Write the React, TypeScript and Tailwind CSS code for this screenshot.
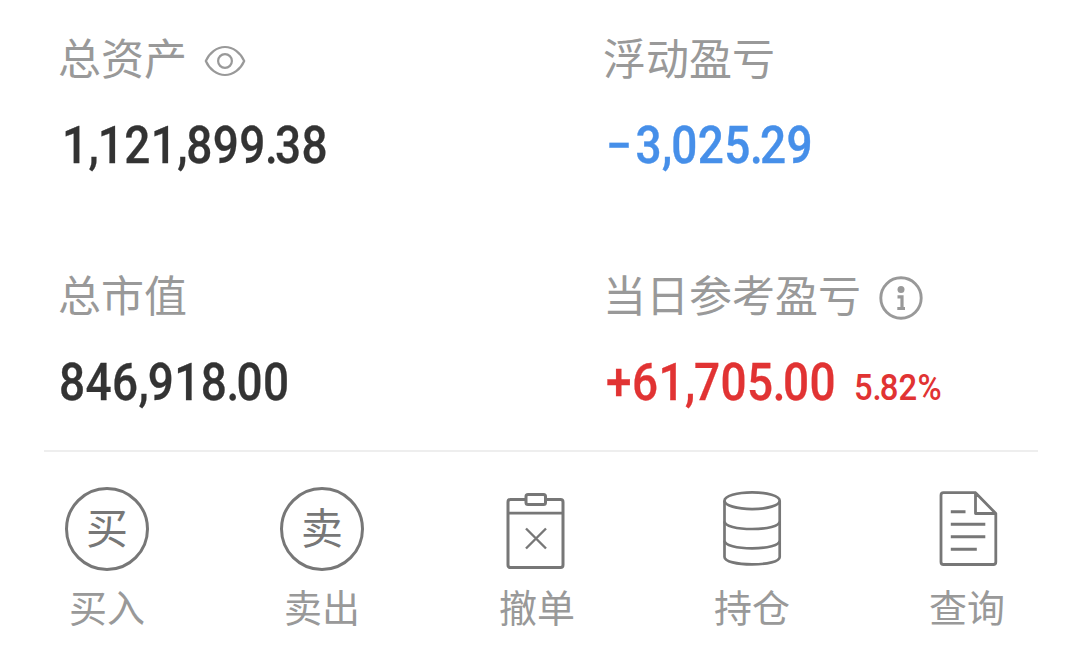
import React from 'react';

const EyeIcon = () => {
  return <svg width="42" height="32" viewBox="0 0 42 32" fill="none" stroke="#999999" strokeWidth="2.2">
      <path d="M1.800 16C5.500 7.5 13 2 21 2S36.500 7.5 40.200 16C36.500 24.500 29 30 21 30S5.500 24.500 1.800 16Z" strokeLinejoin="round" />
      <circle cx="21" cy="16" r="6.900" />
    </svg>;
};
const InfoIcon = () => {
  return <svg width="44" height="44" viewBox="0 0 44 44" fill="none" stroke="#999999" strokeWidth="2.900">
      <circle cx="22" cy="22" r="20.200" />
      <circle cx="22" cy="13.500" r="3.500" fill="#999999" stroke="none" />
      <path d="M18.500 20.800H23V32.500M18.300 32.500H26" strokeWidth="3.200" />
    </svg>;
};
const CancelIcon = () => {
  return <svg width="84" height="84" viewBox="0 0 84 84" fill="none" stroke="#777777" strokeWidth="3">
      <path d="M31 12.500H15.500Q13 12.500 13 15V78Q13 80.500 15.500 80.500H65.500Q68 80.500 68 78V15Q68 12.500 65.500 12.500H50.500" />
      <rect x="31" y="7.500" width="19.500" height="10" rx="2" />
      <path d="M13 26.200H68" strokeWidth="2.800" />
      <path d="M31 41.500L51 61.500M51 41.500L31 61.500" strokeWidth="2.400" />
    </svg>;
};
const HoldingsIcon = () => {
  return <svg width="84" height="84" viewBox="0 0 84 84" fill="none" stroke="#777777" strokeWidth="2.700">
      <ellipse cx="42.100" cy="13.700" rx="27.600" ry="8.400" />
      <path d="M14.500 13.700V70C14.500 74.500 27 77.400 42.100 77.400S69.700 74.500 69.700 70V13.700" />
      <path d="M14.500 34.500C14.500 39 27 42 42.100 42S69.700 39 69.700 34.500" />
      <path d="M14.500 53.800C14.500 58.300 27 61.300 42.100 61.300S69.700 58.300 69.700 53.800" />
    </svg>;
};
const QueryIcon = () => {
  return <svg width="84" height="84" viewBox="0 0 84 84" fill="none" stroke="#777777" strokeWidth="2.800" strokeLinejoin="round">
      <path d="M50.500 5.700H18.500Q16 5.700 16 8.200V75Q16 77.500 18.500 77.500H68.300Q70.800 77.500 70.800 75V26.500L50.500 5.700V26.500H70.800" />
      <path d="M25.800 24.700H40.500M25.800 37.300H60.300M25.800 49.700H60.300M25.800 62.300H51.800" strokeWidth="3" />
    </svg>;
};
const RoundIcon = ({
  text
}: {
  text: string;
}) => {
  return <span className="flex h-[84px] w-[84px] items-center justify-center rounded-full border-[3px] border-[#777777] text-[42px] leading-[78px] text-[#777777]">
      <span className="-mt-[6px]">{text}</span>
    </span>;
};

const actions = [{
  label: '买入',
  icon: <RoundIcon text="买" />
}, {
  label: '卖出',
  icon: <RoundIcon text="卖" />
}, {
  label: '撤单',
  icon: <CancelIcon />
}, {
  label: '持仓',
  icon: <HoldingsIcon />
}, {
  label: '查询',
  icon: <QueryIcon />
}];

const Label = ({
  text,
  children
}: {
  text: string;
  children?: React.ReactNode;
}) => {
  return <div className="flex h-16 items-center text-[43px] leading-[64px] text-[#999999]">
      <span className="-mt-[2px]">{text}</span>
      {children}
    </div>;
};

// condensed digits, punctuation sits tighter than the digits
const Amount = ({
  value,
  className = ''
}: {
  value: string;
  className?: string;
}) => {
  const spacing = (char: string) => {
    switch (char) {
      case '.':
        return 'ml-[-0.015em] tracking-[-0.060em]';
      case ',':
        return 'tracking-[-0.025em]';
      case '−':
        return 'tracking-[0.080em]';
      default:
        return 'tracking-[0.009em]';
    }
  };
  return <span className={`inline-block origin-left scale-x-[0.9] whitespace-nowrap font-['Roboto','Liberation_Sans',sans-serif] font-medium ${className}`}>
      {value.split(/([.,−])/).filter(Boolean).map((part, i) => <span key={i} className={spacing(part)}>{part}</span>)}
    </span>;
};

const App = () => {
  return <div className="h-[658px] w-full overflow-hidden bg-white pt-[25px] font-['Noto_Sans_CJK_SC',sans-serif]">
      <div className="grid grid-cols-[545px_1fr] gap-y-[83px] pl-[58px]">
        <div>
          <Label text="总资产">
            <span className="ml-[17px] mt-2"><EyeIcon /></span>
          </Label>
          <div className="flex h-[90px] items-center pt-[23px] text-[51px] leading-[60px] text-[#333333]">
            <Amount value="1,121,899.38" className="ml-[4px] [-webkit-text-stroke:0.3px_currentColor]" />
          </div>
        </div>
        <div>
          <Label text="浮动盈亏" />
          <div className="flex h-[90px] items-center pt-[23px] text-[51px] leading-[60px] text-[#468fe9]">
            <Amount value="−3,025.29" className="ml-[3px] [-webkit-text-stroke:0.4px_currentColor]" />
          </div>
        </div>
        <div>
          <Label text="总市值" />
          <div className="flex h-[90px] items-center pt-[23px] text-[51px] leading-[60px] text-[#333333]">
            <Amount value="846,918.00" className="ml-[1px] [-webkit-text-stroke:0.3px_currentColor]" />
          </div>
        </div>
        <div>
          <Label text="当日参考盈亏">
            <span className="ml-[18px] mt-[8px]"><InfoIcon /></span>
          </Label>
          <div className="flex h-[90px] items-center pt-[23px] text-[51px] leading-[60px] text-[#e13333]">
            <span className="flex w-[251px]">
              <Amount value="+61,705.00" className="ml-[3px] [-webkit-text-stroke:0.3px_currentColor]" />
            </span>
            <Amount value="5.82%" className="pt-[10px] text-[36.500px]" />
          </div>
        </div>
      </div>
      <div className="ml-[44px] mt-[34px] h-[2px] w-[994px] bg-[#eeeeee]" />
      <div className="-ml-[0.5px] grid w-[1075px] grid-cols-5 pt-[35px]">
        {actions.map(action => <button key={action.label} className="flex flex-col items-center">
            {action.icon}
            <span className="mt-[8px] text-[38px] leading-[54px] text-[#999999]">{action.label}</span>
          </button>)}
      </div>
    </div>;
};
export default App;
